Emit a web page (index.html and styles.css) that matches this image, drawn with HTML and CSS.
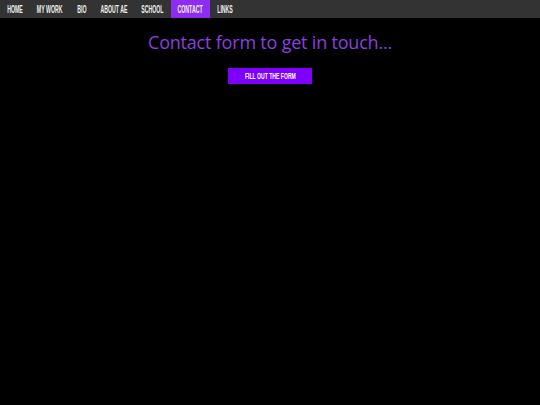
FILE: index.html
```html
<!DOCTYPE html>
<html>
<head>
<meta charset="utf-8">
<link rel="stylesheet" href="styles.css">
</head>
<body>
<nav class="nav">
  <a class="nav-item" href="#"><span class="label">HOME</span></a>
  <a class="nav-item" href="#"><span class="label">MY WORK</span></a>
  <a class="nav-item" href="#"><span class="label">BIO</span></a>
  <a class="nav-item" href="#"><span class="label">ABOUT AE</span></a>
  <a class="nav-item" href="#"><span class="label">SCHOOL</span></a>
  <a class="nav-item active" href="#"><span class="label">CONTACT</span></a>
  <a class="nav-item" href="#"><span class="label">LINKS</span></a>
</nav>
<main class="content">
  <h1 class="title">Contact form to get in touch...</h1>
  <a class="btn" href="#"><span class="label btn-label">FILL OUT THE FORM</span></a>
</main>
</body>
</html>
```
FILE: styles.css
```css
html, body {
  margin: 0;
  padding: 0;
  background: #000;
}
body {
  width: 540px;
  height: 405px;
  overflow: hidden;
}
.nav {
  display: grid;
  grid-template-columns: 29px 41px 23px 41px 37px 39px 29px 1fr;
  height: 18px;
  background: #333333;
}
.nav-item {
  display: flex;
  align-items: center;
  justify-content: center;
  color: #f0f0f0;
  text-decoration: none;
  font-family: "Liberation Sans", sans-serif;
  font-weight: bold;
  font-size: 10px;
  white-space: nowrap;
}
.label {
  display: inline-block;
  transform: scaleX(0.52);
}
.nav-item.active {
  background: #8d2cf2;
}
.content {
  display: flex;
  flex-direction: column;
  align-items: center;
}
.title {
  margin: 11px 0 0;
  font-family: "Open Sans", sans-serif;
  font-weight: 400;
  font-size: 18px;
  line-height: 26px;
  letter-spacing: -0.2px;
  color: #8b3fdf;
}
.btn {
  margin-top: 13px;
  width: 84px;
  height: 16px;
  display: flex;
  align-items: center;
  justify-content: center;
  background: #7f00ff;
  color: #fff;
  text-decoration: none;
  font-family: "Liberation Sans", sans-serif;
  font-weight: bold;
  font-size: 8.5px;
  white-space: nowrap;
}
.btn-label {
  transform: scaleX(0.6);
}
```
